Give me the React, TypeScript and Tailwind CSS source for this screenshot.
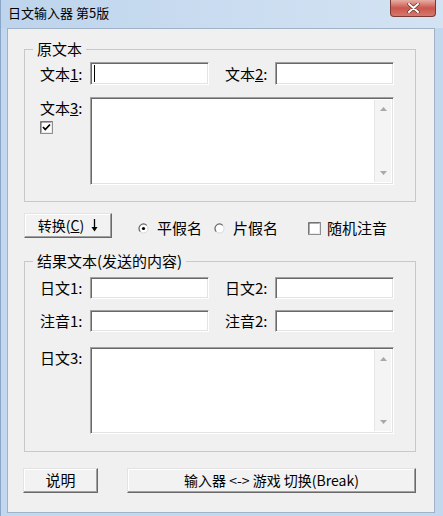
import React from "react";

const inputCls =
  "bg-white border border-t-[#a0a0a0] border-l-[#a0a0a0] border-b-white border-r-white shadow-[inset_1px_1px_0_#696969,inset_-1px_-1px_0_#e3e3e3]";

const btnCls =
  "flex items-center justify-center bg-[#f2f2f2] border border-t-[#e3e3e3] border-l-[#e3e3e3] border-b-[#696969] border-r-[#696969] shadow-[inset_-1px_-1px_0_#a0a0a0,inset_1px_1px_0_#ffffff] text-[14px] text-black";

function TextBox({ w, h, caret }: { w: string; h: string; caret?: boolean }) {
  return (
    <div className={`${w} ${h} ${inputCls} flex items-center`}>
      {caret && <div className="ml-[3px] w-[1px] h-[17px] bg-black" />}
    </div>
  );
}

function Memo({ h }: { h: string }) {
  return (
    <div className={`w-[304px] ${h} ${inputCls} flex`}>
      <div className="flex-1" />
      <div className="w-[17px] my-[2px] mr-[2px] bg-[#f4f4f4] border-l border-[#e6e6e6] flex flex-col items-center justify-between py-[7px]">
        <svg width="7" height="4" viewBox="0 0 7 4">
          <path d="M0 4 L3.5 0 L7 4 Z" fill="#a8a8a8" />
        </svg>
        <svg width="7" height="4" viewBox="0 0 7 4">
          <path d="M0 0 L3.5 4 L7 0 Z" fill="#a8a8a8" />
        </svg>
      </div>
    </div>
  );
}

function CheckBox({ checked }: { checked?: boolean }) {
  return (
    <svg width="13" height="13" viewBox="0 0 13 13">
      <rect x="0.5" y="0.5" width="12" height="12" fill="#ffffff" stroke="#8e8f8f" />
      <path d="M1 12 V1 H12" fill="none" stroke="#5a5a5a" strokeWidth="1" />
      <path d="M1.5 11.5 H11.5 V1.5" fill="none" stroke="#e8e8e8" strokeWidth="1" />
      {checked && (
        <path d="M3 6 L5.3 8.5 L10 3.5" fill="none" stroke="#000" strokeWidth="1.8" />
      )}
    </svg>
  );
}

function Radio({ checked }: { checked?: boolean }) {
  return (
    <svg width="11" height="11" viewBox="0 0 11 11">
      <circle cx="5.5" cy="5.5" r="4.5" fill="#ffffff" stroke="#d8d8d8" />
      <path d="M2.3 8.7 A4.5 4.5 0 0 1 8.7 2.3" fill="none" stroke="#6a6a6a" strokeWidth="1.2" />
      {checked && <circle cx="5.5" cy="5.5" r="1.6" fill="#000" />}
    </svg>
  );
}

export default function App() {
  return (
    <div className="w-[443px] h-[516px] bg-[#c3d8ee] border-l border-[#8aa6c6] flex flex-col font-['Noto_Sans_CJK_SC','Noto_Sans',sans-serif] text-black overflow-hidden">
      {/* title bar */}
      <div className="h-[28px] flex items-start bg-gradient-to-r from-[#bdd4ec] via-[#cadcf0] to-[#d3e3f3]">
        <div className="pl-[7px] pt-[5px] leading-[16px] text-[13px]">日文输入器 第5版</div>
        <div className="ml-auto mr-[7px] w-[46px] h-[17px] rounded-b-[4px] border border-t-0 border-[#7a3a34] bg-gradient-to-b from-[#e6aea4] via-[#c9564d] to-[#d8776d] flex items-center justify-center">
          <svg width="13" height="10" viewBox="0 0 13 10">
            <path d="M2 1 L11 9 M11 1 L2 9" stroke="#5a2a25" strokeWidth="3.2" strokeLinecap="round" />
            <path d="M2 1 L11 9 M11 1 L2 9" stroke="#ffffff" strokeWidth="2" strokeLinecap="round" />
          </svg>
        </div>
      </div>

      {/* client */}
      <div className="ml-[6px] w-[428px] h-[485px] bg-[#f0f0f0] border border-[#9fb2c6] flex flex-col">
        {/* group 1 */}
        <fieldset className="ml-[16px] mt-[11px] w-[392px] border border-[#c8c8c8] pb-[16px]">
          <legend className="ml-[8px] px-[4px] text-[15px] leading-[18px]">原文本</legend>
          <div className="pl-[15px]">
            <div className="mt-[4px] flex items-center">
              <div className="w-[50px] text-[15px] leading-[20px]">
                文本<span className="underline">1</span>:
              </div>
              <TextBox w="w-[119px]" h="h-[23px]" caret />
              <div className="ml-[16px] w-[50px] text-[15px] leading-[20px]">
                文本<span className="underline">2</span>:
              </div>
              <TextBox w="w-[119px]" h="h-[23px]" />
            </div>
            <div className="mt-[12px] flex items-start">
              <div className="w-[50px] flex flex-col">
                <div className="text-[15px] leading-[22px]">
                  文本<span className="underline">3</span>:
                </div>
                <div className="mt-[2px] flex">
                  <CheckBox checked />
                </div>
              </div>
              <Memo h="h-[88px]" />
            </div>
          </div>
        </fieldset>

        {/* convert row */}
        <div className="mt-[11px] flex items-start">
          <div className={`ml-[16px] w-[88px] h-[25px] ${btnCls}`}>
            <span>
              转换(<span className="underline">C</span>)
            </span>
            <svg className="ml-[7px]" width="7" height="13" viewBox="0 0 7 13">
              <path d="M3.5 0 V11" stroke="#000" strokeWidth="1.3" />
              <path d="M0.5 8 L3.5 12.5 L6.5 8 Z" fill="#000" />
            </svg>
          </div>
          <div className="mt-[5px] h-[20px] flex items-center text-[15px]">
            <div className="ml-[26px] flex">
              <Radio checked />
            </div>
            <span className="ml-[8px]">平假名</span>
            <div className="ml-[12px] flex">
              <Radio />
            </div>
            <span className="ml-[8px]">片假名</span>
            <div className="ml-[30px] flex">
              <CheckBox />
            </div>
            <span className="ml-[6px]">随机注音</span>
          </div>
        </div>

        {/* group 2 */}
        <fieldset className="ml-[16px] mt-[14px] w-[392px] border border-[#c8c8c8] pb-[17px]">
          <legend className="ml-[8px] px-[4px] text-[15px] leading-[18px]">结果文本(发送的内容)</legend>
          <div className="pl-[15px]">
            <div className="mt-[7px] flex items-center">
              <div className="w-[50px] text-[15px] leading-[20px]">日文1:</div>
              <TextBox w="w-[119px]" h="h-[22px]" />
              <div className="ml-[16px] w-[50px] text-[15px] leading-[20px]">日文2:</div>
              <TextBox w="w-[119px]" h="h-[22px]" />
            </div>
            <div className="mt-[11px] flex items-center">
              <div className="w-[50px] text-[15px] leading-[20px]">注音1:</div>
              <TextBox w="w-[119px]" h="h-[22px]" />
              <div className="ml-[16px] w-[50px] text-[15px] leading-[20px]">注音2:</div>
              <TextBox w="w-[119px]" h="h-[22px]" />
            </div>
            <div className="mt-[15px] flex items-start">
              <div className="w-[50px] text-[15px] leading-[22px]">日文3:</div>
              <Memo h="h-[87px]" />
            </div>
          </div>
        </fieldset>

        {/* bottom buttons */}
        <div className="mt-[16px] flex">
          <div className={`ml-[15px] w-[75px] h-[25px] ${btnCls} text-[15px]`}>说明</div>
          <div className={`ml-[29px] w-[289px] h-[25px] ${btnCls}`}>输入器 &lt;-&gt; 游戏 切换(Break)</div>
        </div>
      </div>
    </div>
  );
}
